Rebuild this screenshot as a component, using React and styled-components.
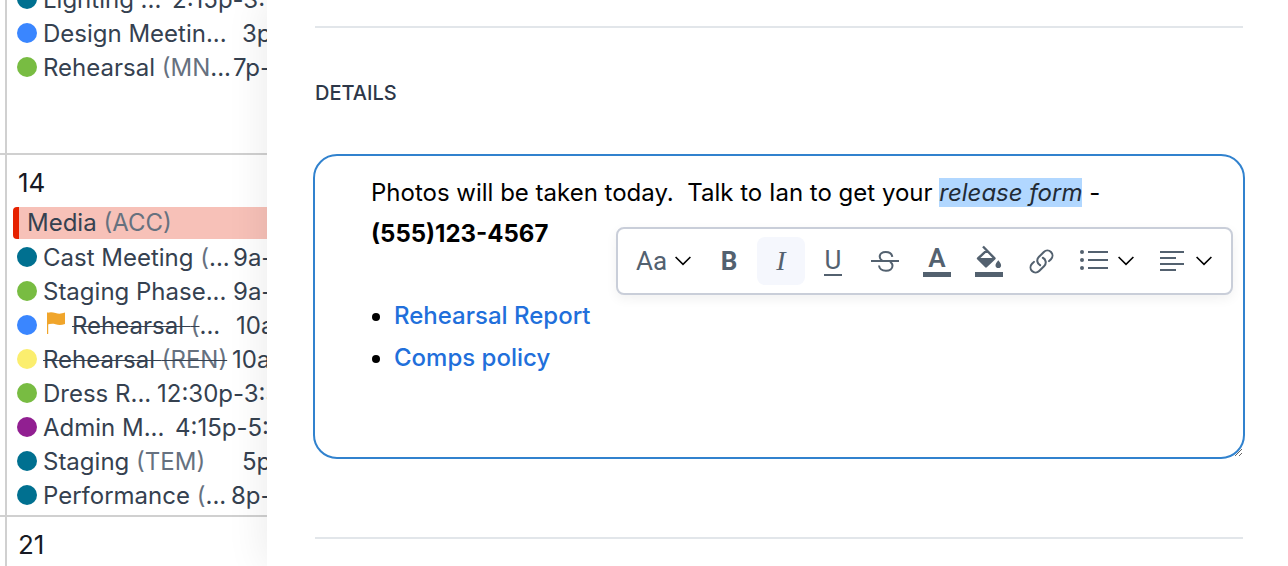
import styled, { createGlobalStyle } from "styled-components";

const GlobalStyle = createGlobalStyle`
  * {
    box-sizing: border-box;
  }

  body {
    margin: 0;
    overflow: hidden;
    background: #fff;
    font-family: Inter, "Liberation Sans", sans-serif;
    font-size: 24px;
    color: #000;
  }
`;

const Page = styled.div`
  display: flex;
  height: 100vh;
  overflow: hidden;
`;

const Calendar = styled.section`
  flex: 0 0 267px;
  overflow: hidden;
  background: #fff;
`;

const Week = styled.div`
  display: grid;
  grid-template-columns: 7px 1fr;
  min-height: 362px;
  border-bottom: 2px solid #d0d0d0;

  /* the calendar is scrolled part way through its first week */
  &:first-child {
    min-height: 0;
    margin-top: -18px;
  }

  &:first-child > :last-child {
    padding-bottom: 69px;
  }
`;

const Gutter = styled.div`
  border-right: 2px solid #d0d0d0;
`;

const Day = styled.div`
  overflow: hidden;
  white-space: nowrap;
`;

const DayNumber = styled.div`
  height: 52px;
  padding: 0 11px;
  font-size: 26px;
  line-height: 56px;
  color: #171923;
`;

const AllDay = styled.div`
  height: 32px;
  margin: 0 0 1px 6px;
  padding-left: 8px;
  border-left: 6px solid #e62200;
  border-radius: 4px 0 0 4px;
  background: #f7c1b8;
  line-height: 32px;
  color: #354150;
`;

const EventRow = styled.div`
  display: flex;
  height: 34px;
  padding-left: 10px;
  line-height: 36px;
  color: #354150;
`;

const Dot = styled.span`
  flex: none;
  width: 20px;
  height: 20px;
  margin: 7px 6px 0 0;
  border-radius: 50%;
  background: ${(p) => p.$color};
`;

const Title = styled.span`
  flex: 0 0 ${(p) => p.$width}px;

  svg {
    margin: 0 7px 0 4px;
  }
`;

const Name = styled.span`
  text-decoration: ${(p) => (p.$struck ? "line-through" : "none")};
  text-decoration-thickness: 1px;
`;

const Venue = styled.span`
  color: #66717f;
`;

const Drawer = styled.main`
  position: relative;
  flex: 1;
  min-width: 0;
  padding: 26px 45px 0 48px;
  background: #fff;
  box-shadow: 0 0 40px rgba(0, 0, 0, 0.09);
`;

const Divider = styled.hr`
  height: 2px;
  margin: 0;
  border: 0;
  background: #e2e6ea;
`;

const Heading = styled.h2`
  margin: 52px 0 48px;
  font-size: 20px;
  font-weight: 500;
  line-height: 26px;
  color: #2d3748;
`;

const EditorFrame = styled.div`
  position: relative;
  margin: 0 -2px 78px;
`;

const Editor = styled.div`
  min-height: 305px;
  padding: 16px 56px;
  overflow: auto;
  resize: vertical;
  outline: none;
  border: 2px solid #3182ce;
  border-radius: 24px;
  line-height: 41px;

  p {
    min-height: 41px;
    margin: 0;
    white-space: pre-wrap;
  }

  ul {
    margin: 0;
    padding-left: 23px;
    line-height: 42px;
  }

  a {
    color: #216fdb;
    font-weight: 500;
    text-decoration: none;
  }

  strong {
    white-space: nowrap;
  }
`;

const Selected = styled.em`
  background: #b1d7ff;
  color: #222b36;
`;

const Toolbar = styled.div`
  position: absolute;
  top: 73px;
  right: 12px;
  display: flex;
  gap: 4px;
  padding: 8px;
  border: 2px solid #c9ced9;
  border-radius: 8px;
  background: #fff;
  box-shadow: 0 4px 12px rgba(0, 0, 0, 0.06);
`;

const Tool = styled.button`
  display: flex;
  align-items: center;
  justify-content: center;
  gap: ${(p) => (p.$gap ? p.$gap : 0)}px;
  width: ${(p) => (p.$gap ? 75 : 48)}px;
  height: 48px;
  padding: 0;
  border: 0;
  border-radius: 8px;
  background: ${(p) => (p.$active ? "#f5f7fd" : "transparent")};
  color: #53616f;
  font-family: Roboto, "Liberation Sans", sans-serif;
  font-size: 26px;
  line-height: 28px;
  cursor: pointer;
`;

const ItalicMark = styled.i`
  font-family: "Liberation Serif", serif;
  font-size: 28px;
`;

const UnderlineMark = styled.span`
  width: 18px;
  border-bottom: 2px solid;
  line-height: 27px;
`;

const ColorMark = styled.span`
  width: 28px;
  border-bottom: 5px solid;
  font-weight: 600;
  line-height: 27px;
`;

const Chevron = () => (
  <svg width="16" height="10" viewBox="0 0 16 10" fill="none" stroke="#000" strokeWidth="1.6">
    <path d="M.6 1L8 8.4 15.4 1" />
  </svg>
);

const Flag = () => (
  <svg width="18" height="22" viewBox="0 0 18 22" fill="#f0a52b">
    <path d="M0 .5h1.2V22H0zM0 1c3-1.2 5.5-1 8.5 0s6 .8 9.500-.4V12c-3.500 1.200-6.500 1.200-9.500.3S3 11.800 0 12.800z" />
  </svg>
);

const StrikeIcon = () => (
  <svg width="28" height="22" viewBox="0 0 28 22" fill="none" stroke="currentColor" strokeWidth="2">
    <path d="M0 11h28M21.300 6.800C20.800 3.600 18.200 2 14.700 2 11.200 2 8.700 3.800 8.700 6.700c0 1.800 1 3 2.500 3.900M8 15.500c.4 3.300 3.100 5.200 7 5.200 3.800 0 6.500-1.900 6.500-4.900 0-1.900-.9-3.200-2.500-4" />
  </svg>
);

const FillIcon = () => (
  <svg width="28" height="32" viewBox="0 0 28 32" fill="currentColor">
    <path d="M8 1.500l11.500 11.800L11 21.500l-8-8L12 5.200" fill="none" stroke="currentColor" strokeWidth="2.400" strokeLinejoin="round" />
    <path d="M2.500 13h17.500l-9 9zM23.300 15.200c1.700 2 2.800 3.600 2.800 5a2.800 2.800 0 0 1-5.600 0c0-1.400 1.100-3 2.800-5zM0 27h28v5H0z" />
  </svg>
);

const LinkIcon = () => (
  <svg width="27" height="27" viewBox="0 0 24 24" fill="none" stroke="currentColor" strokeWidth="1.800" strokeLinecap="round">
    <path d="M13.190 8.688a4.500 4.500 0 0 1 1.242 7.244l-4.500 4.500a4.500 4.500 0 0 1-6.364-6.364l1.757-1.757m13.350-.622l1.757-1.757a4.500 4.500 0 0 0-6.364-6.364l-4.500 4.500a4.500 4.500 0 0 0 1.242 7.244" />
  </svg>
);

const ListIcon = () => (
  <svg width="28" height="22" viewBox="0 0 28 22" fill="currentColor">
    <circle cx="2" cy="2" r="2" />
    <circle cx="2" cy="10" r="2" />
    <circle cx="2" cy="18" r="2" />
    <path d="M8 1h20v2H8zM8 9h20v2H8zM8 17h20v2H8z" />
  </svg>
);

const AlignIcon = () => (
  <svg width="24" height="20" viewBox="0 0 24 20" fill="currentColor">
    <path d="M0 0h24v2H0zM0 6h16v2H0zM0 12h24v2H0zM0 18h16v2H0z" />
  </svg>
);

const events = [
  { color: "#007090", name: "Lighting ", cut: true, time: "2:15p-3:15p", width: 129 },
  { color: "#3a86ff", name: "Design Meetin", cut: true, time: "3p-5p", width: 199 },
  { color: "#78bc42", name: "Rehearsal ", venue: "(MN", cut: true, time: "7p-10p", width: 190 },
];

const nextEvents = [
  { color: "#007090", name: "Cast Meeting ", venue: "(", cut: true, time: "9a-10a", width: 190 },
  { color: "#78bc42", name: "Staging Phase", cut: true, time: "9a-12p", width: 190 },
  { color: "#3a86ff", name: "Rehearsal ", venue: "(", cut: true, time: "10a-1p", width: 193, flag: true, struck: true },
  { color: "#fbee6e", name: "Rehearsal ", venue: "(REN)", time: "10a-1p", width: 189, struck: true },
  { color: "#78bc42", name: "Dress R", cut: true, time: "12:30p-3:30p", width: 114 },
  { color: "#911f91", name: "Admin M", cut: true, time: "4:15p-5:15p", width: 132 },
  { color: "#007090", name: "Staging ", venue: "(TEM)", time: "5p-7p", width: 199 },
  { color: "#007090", name: "Performance ", venue: "(", cut: true, time: "8p-10p", width: 188 },
];

const Event = ({ event }) => (
  <EventRow>
    <Dot $color={event.color} />
    <Title $width={event.width}>
      {event.flag && <Flag />}
      <Name $struck={event.struck}>
        {event.name}
        {event.venue && <Venue>{event.venue}</Venue>}
      </Name>
      {event.cut && "..."}
    </Title>
    <span>{event.time}</span>
  </EventRow>
);

const App = () => (
  <Page>
    <GlobalStyle />
    <Calendar>
      <Week>
        <Gutter />
        <Day>
          {events.map((event) => (
            <Event key={event.name} event={event} />
          ))}
        </Day>
      </Week>
      <Week>
        <Gutter />
        <Day>
          <DayNumber>14</DayNumber>
          <AllDay>
            Media <Venue>(ACC)</Venue>
          </AllDay>
          {nextEvents.map((event) => (
            <Event key={event.name + event.venue} event={event} />
          ))}
        </Day>
      </Week>
      <Week>
        <Gutter />
        <Day>
          <DayNumber>21</DayNumber>
        </Day>
      </Week>
    </Calendar>
    <Drawer>
      <Divider />
      <Heading id="details">DETAILS</Heading>
      <EditorFrame>
        <Editor
          role="textbox"
          aria-multiline="true"
          aria-labelledby="details"
          contentEditable
          suppressContentEditableWarning
          spellCheck={false}
        >
          <p>
            {"Photos will be taken today.  Talk to Ian to get your "}
            <Selected>release form</Selected> - <strong>(555)123-4567</strong>
          </p>
          <p />
          <ul>
            <li>
              <a href="#report">Rehearsal Report</a>
            </li>
            <li>
              <a href="#comps">Comps policy</a>
            </li>
          </ul>
        </Editor>
        <Toolbar role="toolbar" aria-label="Formatting">
          <Tool $gap={8} aria-label="Text style">
            Aa
            <Chevron />
          </Tool>
          <Tool aria-label="Bold">
            <b>B</b>
          </Tool>
          <Tool $active aria-label="Italic" aria-pressed="true">
            <ItalicMark>I</ItalicMark>
          </Tool>
          <Tool aria-label="Underline">
            <UnderlineMark>U</UnderlineMark>
          </Tool>
          <Tool aria-label="Strikethrough">
            <StrikeIcon />
          </Tool>
          <Tool aria-label="Text color">
            <ColorMark>A</ColorMark>
          </Tool>
          <Tool aria-label="Background color">
            <FillIcon />
          </Tool>
          <Tool aria-label="Insert link">
            <LinkIcon />
          </Tool>
          <Tool $gap={10} aria-label="List">
            <ListIcon />
            <Chevron />
          </Tool>
          <Tool $gap={12} aria-label="Align">
            <AlignIcon />
            <Chevron />
          </Tool>
        </Toolbar>
      </EditorFrame>
      <Divider />
    </Drawer>
  </Page>
);

export default App;
